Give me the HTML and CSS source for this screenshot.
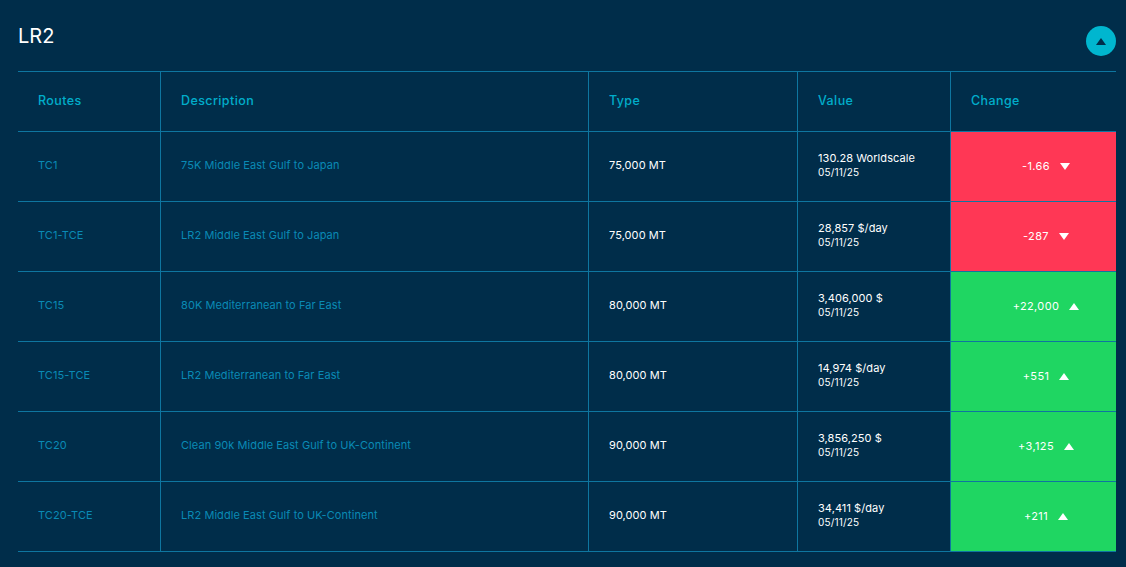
FILE: index.html
```html
<!DOCTYPE html>
<html lang="en">
<head>
<meta charset="utf-8">
<title>LR2</title>
<link rel="stylesheet" href="styles.css">
</head>
<body>
<main class="panel">
  <header class="head">
    <h2 class="title">LR2</h2>
    <button class="toggle" type="button" aria-label="Collapse"><span class="tri tri-up tri-dark"></span></button>
  </header>
  <table class="routes">
    <colgroup><col class="c1"><col class="c2"><col class="c3"><col class="c4"><col class="c5"></colgroup>
    <thead>
      <tr><th>Routes</th><th>Description</th><th>Type</th><th>Value</th><th>Change</th></tr>
    </thead>
    <tbody>
      <tr><td class="link">TC1</td><td class="link">75K Middle East Gulf to Japan</td><td class="type">75,000 MT</td><td class="val"><div>130.28 Worldscale</div><div class="date">05/11/25</div></td><td class="chg down"><span class="amt">-1.66</span><span class="tri tri-down"></span></td></tr>
      <tr><td class="link">TC1-TCE</td><td class="link">LR2 Middle East Gulf to Japan</td><td class="type">75,000 MT</td><td class="val"><div>28,857 $/day</div><div class="date">05/11/25</div></td><td class="chg down"><span class="amt">-287</span><span class="tri tri-down"></span></td></tr>
      <tr><td class="link">TC15</td><td class="link">80K Mediterranean to Far East</td><td class="type">80,000 MT</td><td class="val"><div>3,406,000 $</div><div class="date">05/11/25</div></td><td class="chg up"><span class="amt">+22,000</span><span class="tri tri-up"></span></td></tr>
      <tr><td class="link">TC15-TCE</td><td class="link">LR2 Mediterranean to Far East</td><td class="type">80,000 MT</td><td class="val"><div>14,974 $/day</div><div class="date">05/11/25</div></td><td class="chg up"><span class="amt">+551</span><span class="tri tri-up"></span></td></tr>
      <tr><td class="link">TC20</td><td class="link">Clean 90k Middle East Gulf to UK-Continent</td><td class="type">90,000 MT</td><td class="val"><div>3,856,250 $</div><div class="date">05/11/25</div></td><td class="chg up"><span class="amt">+3,125</span><span class="tri tri-up"></span></td></tr>
      <tr><td class="link">TC20-TCE</td><td class="link">LR2 Middle East Gulf to UK-Continent</td><td class="type">90,000 MT</td><td class="val"><div>34,411 $/day</div><div class="date">05/11/25</div></td><td class="chg up"><span class="amt">+211</span><span class="tri tri-up"></span></td></tr>
    </tbody>
  </table>
</main>
</body>
</html>
```
FILE: styles.css
```css
* { box-sizing: border-box; }
html, body { margin: 0; height: 100%; overflow: hidden; }
body {
  background: #002d4a;
  color: #fff;
  font-family: Inter, "Liberation Sans", sans-serif;
}
.panel { padding: 0 10px 0 18px; }
.head {
  height: 71px;
  display: flex;
  justify-content: space-between;
  align-items: flex-start;
}
.title {
  margin: 23px 0 0;
  font-size: 20px;
  line-height: 26px;
  font-weight: 400;
}
.toggle {
  margin-top: 26px;
  width: 30px;
  height: 30px;
  padding: 0;
  border: 0;
  border-radius: 50%;
  background: #00b6cf;
  display: flex;
  align-items: center;
  justify-content: center;
}
.routes {
  width: 1098px;
  table-layout: fixed;
  border-collapse: collapse;
}
.c1 { width: 142.5px; }
.c2 { width: 428px; }
.c3 { width: 209px; }
.c4 { width: 153px; }
.c5 { width: 165.5px; }
.routes th, .routes td {
  border: 1px solid #0e76a0;
  padding: 0 0 3px 20px;
  text-align: left;
  vertical-align: middle;
}
.routes tr > :first-child { border-left: 0; }
.routes tr > :last-child { border-right: 0; }
.routes th {
  height: 60px;
  font-size: 12.5px;
  font-weight: 500;
  letter-spacing: 0.4px;
  color: #00adcb;
}
.routes td { height: 70px; font-size: 11px; letter-spacing: 0.07px; }
.routes .link { color: #0a8ab5; }
.val { line-height: 14px; }
.date { font-size: 10px; line-height: 14px; letter-spacing: 0.15px; }
.routes .chg { padding: 0 0 2px; text-align: center; }
.chg.down { background: #ff3755; }
.chg.up { background: #1fd662; }
.amt { margin-left: 25px; letter-spacing: 0.35px; }
.tri {
  display: inline-block;
  width: 0;
  height: 0;
  border-left: 5px solid transparent;
  border-right: 5px solid transparent;
}
.tri-up { border-bottom: 7px solid #fff; }
.tri-down { border-top: 7px solid #fff; }
.chg .tri { margin-left: 10px; }
.tri-up.tri-dark { border-bottom-color: #002d4a; }
```
